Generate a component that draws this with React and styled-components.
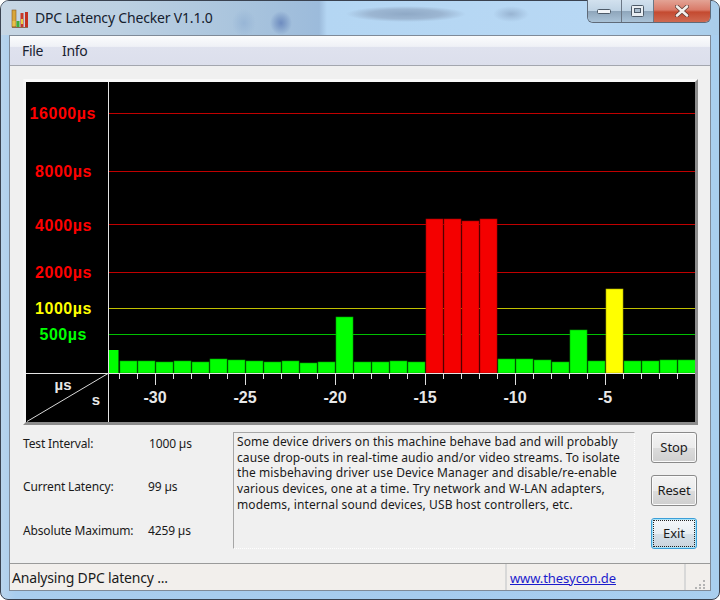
import React from "react";
import styled, { createGlobalStyle } from "styled-components";

const Global = createGlobalStyle`
  html, body { margin: 0; padding: 0; background: #fff; }
  #root { width: 720px; height: 600px; overflow: hidden; }
  * { box-sizing: border-box; }
`;

const uiFont = `"Noto Sans", "Open Sans", sans-serif`;

const Window = styled.div`
  width: 720px;
  height: 600px;
  display: flex;
  flex-direction: column;
  padding: 0 8px 8px;
  border: 1px solid #3a4250;
  border-radius: 9px 9px 8px 8px;
  background: linear-gradient(90deg, #b9d4ec 0%, #a9cdee 2%, #a5cbee 60%, #a9cfef 100%);
  font-family: ${uiFont};
  color: #1a1a1a;
`;

const TitleBar = styled.div`
  height: 34px;
  flex: none;
  margin: 0 -8px;
  padding-left: 10px;
  display: flex;
  align-items: flex-start;
  border-radius: 8px 8px 0 0;
  background:
    radial-gradient(ellipse 11px 12px at 280px 22px, #6e8cc0 0%, #84a2cb 45%, rgba(150,180,215,0) 100%),
    radial-gradient(ellipse 12px 14px at 243px 22px, #98b6d6 0%, rgba(150,180,215,0) 100%),
    radial-gradient(ellipse 60px 8px at 405px 13px, #8fa9c6 0%, #9cb6d2 60%, rgba(170,205,238,0) 100%),
    radial-gradient(ellipse 18px 8px at 510px 13px, #98b4d2 0%, rgba(170,205,238,0) 100%),
    linear-gradient(90deg, #c7d6e4 0, #bcd0e2 120px, #a9c4dd 240px, #9cbbdb 318px, #b4d6f3 326px, #b8d8f4 600px, #a9cdea 720px);
`;

const AppIcon = styled.svg`
  width: 18px;
  height: 19px;
  margin-top: 8px;
  flex: none;
`;

const TitleText = styled.div`
  margin: 7px 0 0 6px;
  font-size: 14px;
  line-height: 20px;
  letter-spacing: -0.18px;
  color: #15202e;
  white-space: nowrap;
`;

const Spacer = styled.div`
  flex: 1;
`;

const Caption = styled.div`
  display: flex;
  height: 23px;
  margin-right: 8px;
  margin-top: -1px;
  border: 1px solid #5f6a78;
  border-top: none;
  border-radius: 0 0 6px 6px;
  overflow: hidden;
`;

const CaptionButton = styled.div`
  width: ${(p) => p.$w}px;
  display: flex;
  align-items: center;
  justify-content: center;
  border-left: ${(p) => (p.$first ? "none" : "1px solid #6b7785")};
  background: ${(p) =>
    p.$close
      ? "linear-gradient(180deg, #e3a395 0%, #d97a68 45%, #c44a30 55%, #cf6a52 100%)"
      : "linear-gradient(180deg, #d2e1ee 0%, #bfd3e4 48%, #8fa6bb 52%, #aac3d8 100%)"};
`;

const Client = styled.div`
  flex: 1;
  min-height: 0;
  display: flex;
  flex-direction: column;
  border: 1px solid #7f8a98;
  background: #f0f0f0;
`;

const MenuBar = styled.div`
  height: 30px;
  flex: none;
  display: flex;
  align-items: center;
  gap: 19px;
  padding: 0 0 0 12px;
  border-bottom: 1px solid #a3a6ae;
  background: linear-gradient(180deg, #fbfcfd 0%, #eff1f6 36%, #dfe2ee 38%, #dcdfec 100%);
`;

const MenuItem = styled.span`
  font-size: 14px;
  letter-spacing: -0.35px;
  color: #1a2230;
`;

const Content = styled.div`
  flex: 1;
  min-height: 0;
  padding: 13px 0 0 13px;
  display: flex;
  flex-direction: column;
  gap: 7px;
`;

const ChartFrame = styled.div`
  width: 675px;
  height: 346px;
  flex: none;
  border-style: solid;
  border-width: 3px;
  border-color: #f9f9f9 #8c8c8c #8c8c8c #f4f4f4;
`;

const ChartSvg = styled.svg`
  display: block;
  width: 669px;
  height: 340px;
  background: #000;
`;

const LowerRow = styled.div`
  display: flex;
  align-items: flex-start;
`;

const Stats = styled.div`
  width: 210px;
  flex: none;
  padding-top: 4px;
  display: grid;
  grid-auto-rows: 16px;
  row-gap: 27.4px;
`;

const StatRow = styled.div`
  display: grid;
  grid-template-columns: 125px 1fr;
  font-size: 12px;
  line-height: 16px;
  letter-spacing: -0.15px;
  white-space: nowrap;
`;

const StatValue = styled.span`
  padding-left: ${(p) => (p.$narrow ? 0 : 1)}px;
`;

const InfoBox = styled.div`
  width: 402px;
  height: 117px;
  flex: none;
  padding: 1px 0 0 3px;
  border-top: 1px solid #a6a6a6;
  border-left: 1px solid #a6a6a6;
  border-right: 1px dotted #ffffff;
  border-bottom: 1px dotted #ffffff;
  font-size: 12px;
  line-height: 15.7px;
  letter-spacing: 0.1px;
`;

const InfoLine = styled.div`
  white-space: nowrap;
`;

const Buttons = styled.div`
  margin-left: 16px;
  width: 46px;
  flex: none;
  display: flex;
  flex-direction: column;
  gap: 12px;
`;

const PushButton = styled.button`
  width: 46px;
  height: 31px;
  padding: 0 0 2px;
  font-family: inherit;
  font-size: 13px;
  letter-spacing: -0.1px;
  color: #1a1a1a;
  border-radius: 3px;
  border: 1px solid ${(p) => (p.$focus ? "#3c9fd8" : "#8a8a8a")};
  outline: ${(p) => (p.$focus ? "1px dotted #222" : "none")};
  outline-offset: -3px;
  box-shadow: inset 0 0 0 1px ${(p) => (p.$focus ? "#a8e4fa" : "#fbfbfb")};
  background: ${(p) =>
    p.$focus
      ? "linear-gradient(180deg, #f4f8fb 0%, #e8eef3 50%, #d6e0e8 52%, #c9d4dd 100%)"
      : "linear-gradient(180deg, #f3f3f3 0%, #ebebeb 50%, #dcdcdc 52%, #cfcfcf 100%)"};
`;

const StatusBar = styled.div`
  height: 27px;
  flex: none;
  display: flex;
  align-items: stretch;
  border-top: 1px solid #9a9a9a;
  background: #f2efec;
  font-size: 14px;
  line-height: 28px;
`;

const StatusMain = styled.div`
  width: 497px;
  flex: none;
  padding-left: 2px;
  letter-spacing: -0.18px;
  border-right: 2px solid #d8d8d8;
`;

const StatusLink = styled.a`
  display: block;
  flex: 1;
  padding-left: 3px;
  font-size: 13px;
  letter-spacing: -0.1px;
  color: #1c1ccc;
  text-decoration: underline;
  border-right: 2px solid #d8d8d8;
`;

const Grip = styled.svg`
  width: 24px;
  height: 26px;
  flex: none;
`;

const bars = [361,361,362,361,362,359,360,361,362,361,363,362,317,362,362,361,362,219,219,221,219,359,359,360,362,330,361,289,361,361,360,360];

const gridLines = [
  { y: 113, color: "#c00000", label: "16000µs", tx: 96, ty: 119, text: "#ff0000" },
  { y: 171, color: "#c00000", label: "8000µs", tx: 92, ty: 177, text: "#ff0000" },
  { y: 224, color: "#c00000", label: "4000µs", tx: 92, ty: 231, text: "#ff0000" },
  { y: 272, color: "#c00000", label: "2000µs", tx: 92, ty: 278, text: "#ff0000" },
  { y: 308, color: "#c0c000", label: "1000µs", tx: 92, ty: 314, text: "#ffff00" },
  { y: 334, color: "#00c000", label: "500µs", tx: 87, ty: 340, text: "#00ff00" },
];

const Chart = () => {
  const ticks = [];
  for (let x = 119; x <= 695; x += 18) ticks.push(x);
  return (
    <ChartSvg viewBox="26 82 669 340">
      {gridLines.map((g) => (
        <line key={g.y} x1="108" x2="695" y1={g.y + 0.5} y2={g.y + 0.5} stroke={g.color} strokeWidth="1" />
      ))}
      {gridLines.map((g) => (
        <text key={g.label} x={g.tx} y={g.ty} textAnchor="end" fill={g.text} fontFamily="Liberation Sans" fontWeight="700" fontSize="16" letterSpacing="0.55">
          {g.label}
        </text>
      ))}
      <rect x="109" y="350" width="9.5" height="23" fill="#00ff00" />
      {bars.map((top, i) => {
        const fill = top < 250 ? "#f40000" : top < 300 ? "#ffff00" : "#00ff00";
        const stroke = top < 250 ? "#a00000" : top < 300 ? "#a8a800" : "#00a000";
        return (
          <rect key={i} x={120 + i * 18} y={top} width={i === 31 ? 18 : 17} height={373 - top} fill={fill} stroke={stroke} strokeWidth="0.6" />
        );
      })}
      <line x1="108.5" x2="108.5" y1="82" y2="422" stroke="#e4e4e4" />
      <line x1="26" x2="695" y1="373.5" y2="373.5" stroke="#e4e4e4" strokeWidth="1.2" />
      <line x1="27" x2="108" y1="421.5" y2="373.5" stroke="#d8d8d8" />
      {ticks.map((x) => (
        <line key={x} x1={x + 0.5} x2={x + 0.5} y1="374" y2={(x - 155) % 90 === 0 ? 385 : 379} stroke="#e0e0e0" />
      ))}
      {[[-30, 155], [-25, 245], [-20, 335], [-15, 425], [-10, 515], [-5, 605]].map(([v, x]) => (
        <text key={v} x={x} y="403" textAnchor="middle" fill="#e8e8e8" fontFamily="Liberation Sans" fontWeight="700" fontSize="16">
          {v}
        </text>
      ))}
      <text x="63" y="390" textAnchor="middle" fill="#e8e8e8" fontFamily="Liberation Sans" fontWeight="700" fontSize="15">µs</text>
      <text x="96" y="405" textAnchor="middle" fill="#e8e8e8" fontFamily="Liberation Sans" fontWeight="700" fontSize="15">s</text>
    </ChartSvg>
  );
};

export default function App() {
  return (
    <>
      <Global />
      <Window>
        <TitleBar>
          <AppIcon viewBox="0 0 18 19">
            <rect x="1" y="1" width="4" height="17" fill="#d9a63a" stroke="#8a5a20" strokeWidth="0.6" />
            <rect x="1.5" y="12" width="3" height="5" fill="#e8c04a" />
            <rect x="5.5" y="12" width="3" height="6" fill="#3fae3a" />
            <rect x="9.5" y="4" width="3" height="14" fill="#c83a28" />
            <rect x="10" y="10" width="2" height="5" fill="#e8d040" />
            <rect x="14" y="3" width="3" height="15" fill="#c23020" />
            <rect x="1" y="18" width="16" height="1" fill="#8a6a50" />
          </AppIcon>
          <TitleText>DPC Latency Checker V1.1.0</TitleText>
          <Spacer />
          <Caption>
            <CaptionButton $w={33} $first>
              <svg width="15" height="7" viewBox="0 0 15 7"><rect x="0.5" y="1.5" width="13" height="4" rx="1" fill="#f2f5f8" stroke="#4d5a68" /></svg>
            </CaptionButton>
            <CaptionButton $w={32}>
              <svg width="13" height="12" viewBox="0 0 13 12"><rect x="0.5" y="0.5" width="12" height="11" rx="1" fill="#e8eef3" stroke="#4d5a68" /><rect x="3.5" y="3.5" width="6" height="4" fill="#a9bccd" stroke="#4d5a68" /></svg>
            </CaptionButton>
            <CaptionButton $w={57} $close>
              <svg width="14" height="12" viewBox="0 0 14 12"><path d="M2 1.5 L12 10.5 M12 1.5 L2 10.5" stroke="#5a3a34" strokeWidth="4" strokeLinecap="round" /><path d="M2 1.5 L12 10.5 M12 1.5 L2 10.5" stroke="#f4f0ec" strokeWidth="2.6" strokeLinecap="round" /></svg>
            </CaptionButton>
          </Caption>
        </TitleBar>
        <Client>
          <MenuBar>
            <MenuItem>File</MenuItem>
            <MenuItem>Info</MenuItem>
          </MenuBar>
          <Content>
            <ChartFrame>
              <Chart />
            </ChartFrame>
            <LowerRow>
              <Stats>
                <StatRow><span>Test Interval:</span><StatValue>1000 µs</StatValue></StatRow>
                <StatRow><span>Current Latency:</span><StatValue $narrow>99 µs</StatValue></StatRow>
                <StatRow><span>Absolute Maximum:</span><StatValue $narrow>4259 µs</StatValue></StatRow>
              </Stats>
              <InfoBox>
                <InfoLine>Some device drivers on this machine behave bad and will probably</InfoLine>
                <InfoLine>cause drop-outs in real-time audio and/or video streams. To isolate</InfoLine>
                <InfoLine>the misbehaving driver use Device Manager and disable/re-enable</InfoLine>
                <InfoLine>various devices, one at a time. Try network and W-LAN adapters,</InfoLine>
                <InfoLine>modems, internal sound devices, USB host controllers, etc.</InfoLine>
              </InfoBox>
              <Buttons>
                <PushButton>Stop</PushButton>
                <PushButton>Reset</PushButton>
                <PushButton $focus>Exit</PushButton>
              </Buttons>
            </LowerRow>
          </Content>
          <StatusBar>
            <StatusMain>Analysing DPC latency ...</StatusMain>
            <StatusLink href="#">www.thesycon.de</StatusLink>
            <Grip viewBox="0 0 24 26">
              <g fill="#b4b4b4">
                <rect x="17" y="16" width="2" height="2" />
                <rect x="13" y="20" width="2" height="2" />
                <rect x="17" y="20" width="2" height="2" />
                <rect x="9" y="23" width="2" height="2" />
                <rect x="13" y="23" width="2" height="2" />
                <rect x="17" y="23" width="2" height="2" />
              </g>
            </Grip>
          </StatusBar>
        </Client>
      </Window>
    </>
  );
}
